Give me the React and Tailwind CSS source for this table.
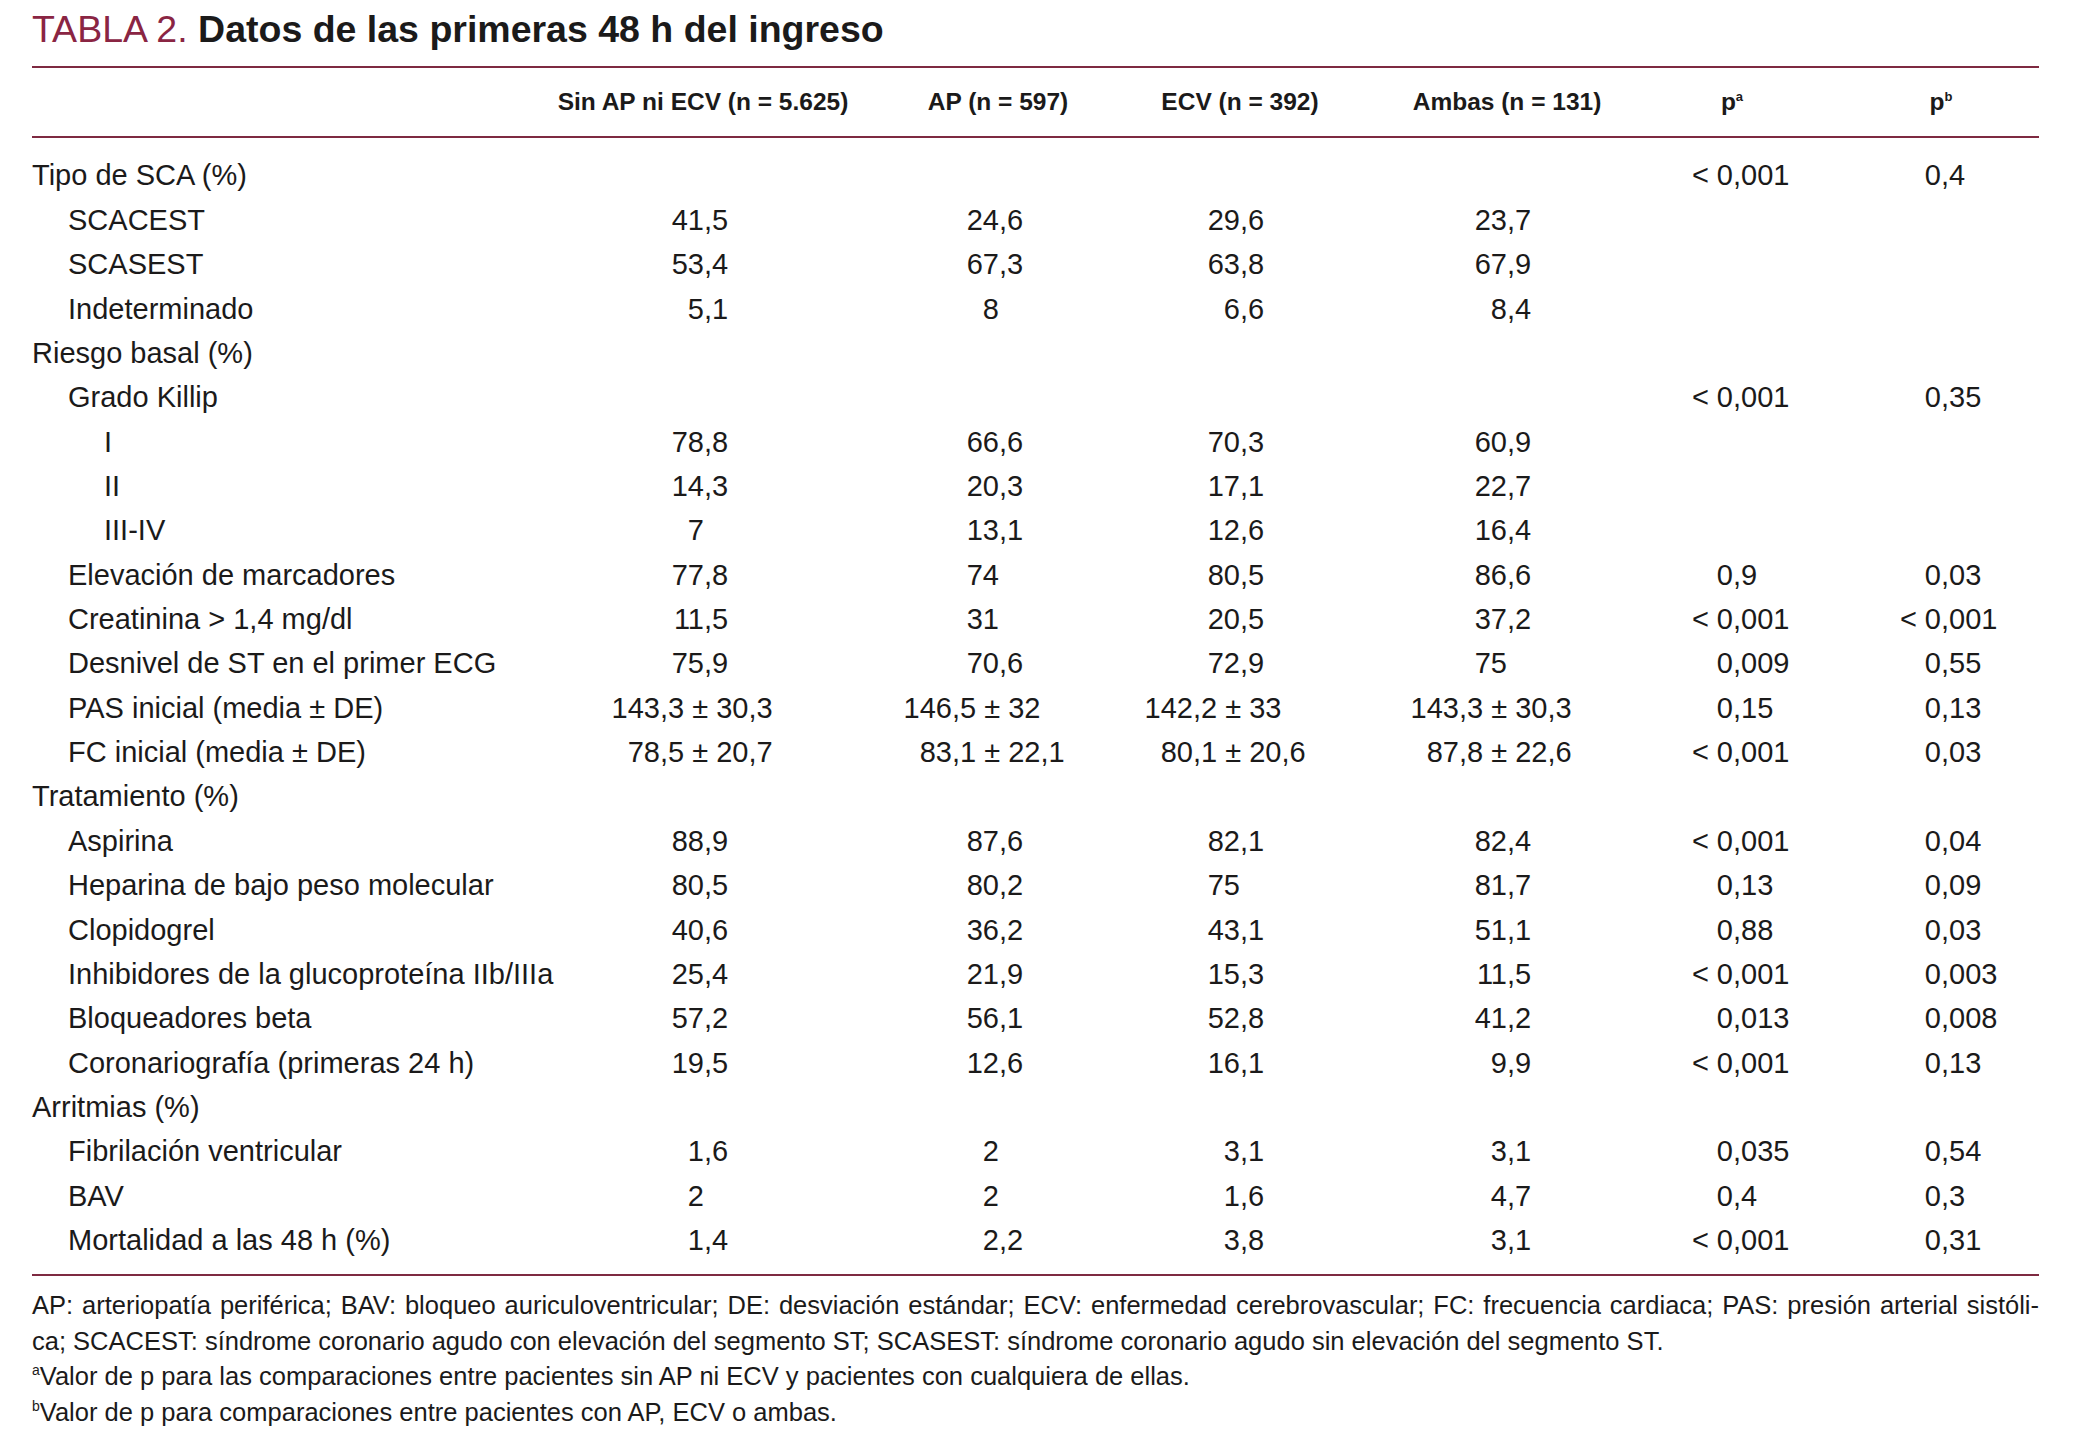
const COLS = [
  { head: 'Sin AP ni ECV (n = 5.625)', hd: 'pr-[10px]', anchor: 'w-[148px]', pm: 'w-[104px]' },
  { head: 'AP (n = 597)', hd: 'pl-[26px]', anchor: 'w-[139px]', pm: 'w-[92px]' },
  { head: 'ECV (n = 392)', hd: '', anchor: 'w-[130px]', pm: 'w-[83px]' },
  { head: 'Ambas (n = 131)', hd: 'pl-[4px]', anchor: 'w-[137px]', pm: 'w-[89px]' },
  { head: 'p', sup: 'a', hd: 'pr-[26px]', anchor: 'w-[93px]', pm: 'w-[93px]' },
  { head: 'p', sup: 'b', hd: 'pr-[7px]', anchor: 'w-[91px]', pm: 'w-[91px]' },
]

const ROWS = [
  ['Tipo de SCA (%)', 0, ['', '', '', '', '< 0,001', '0,4']],
  ['SCACEST', 1, ['41,5', '24,6', '29,6', '23,7']],
  ['SCASEST', 1, ['53,4', '67,3', '63,8', '67,9']],
  ['Indeterminado', 1, ['5,1', '8', '6,6', '8,4']],
  ['Riesgo basal (%)', 0, []],
  ['Grado Killip', 1, ['', '', '', '', '< 0,001', '0,35']],
  ['I', 2, ['78,8', '66,6', '70,3', '60,9']],
  ['II', 2, ['14,3', '20,3', '17,1', '22,7']],
  ['III-IV', 2, ['7', '13,1', '12,6', '16,4']],
  ['Elevación de marcadores', 1, ['77,8', '74', '80,5', '86,6', '0,9', '0,03']],
  ['Creatinina > 1,4 mg/dl', 1, ['11,5', '31', '20,5', '37,2', '< 0,001', '< 0,001']],
  ['Desnivel de ST en el primer ECG', 1, ['75,9', '70,6', '72,9', '75', '0,009', '0,55']],
  ['PAS inicial (media ± DE)', 1, ['143,3 ± 30,3', '146,5 ± 32', '142,2 ± 33', '143,3 ± 30,3', '0,15', '0,13']],
  ['FC inicial (media ± DE)', 1, ['78,5 ± 20,7', '83,1 ± 22,1', '80,1 ± 20,6', '87,8 ± 22,6', '< 0,001', '0,03']],
  ['Tratamiento (%)', 0, []],
  ['Aspirina', 1, ['88,9', '87,6', '82,1', '82,4', '< 0,001', '0,04']],
  ['Heparina de bajo peso molecular', 1, ['80,5', '80,2', '75', '81,7', '0,13', '0,09']],
  ['Clopidogrel', 1, ['40,6', '36,2', '43,1', '51,1', '0,88', '0,03']],
  ['Inhibidores de la glucoproteína IIb/IIIa', 1, ['25,4', '21,9', '15,3', '11,5', '< 0,001', '0,003']],
  ['Bloqueadores beta', 1, ['57,2', '56,1', '52,8', '41,2', '0,013', '0,008']],
  ['Coronariografía (primeras 24 h)', 1, ['19,5', '12,6', '16,1', '9,9', '< 0,001', '0,13']],
  ['Arritmias (%)', 0, []],
  ['Fibrilación ventricular', 1, ['1,6', '2', '3,1', '3,1', '0,035', '0,54']],
  ['BAV', 1, ['2', '2', '1,6', '4,7', '0,4', '0,3']],
  ['Mortalidad a las 48 h (%)', 1, ['1,4', '2,2', '3,8', '3,1', '< 0,001', '0,31']],
]

const INDENT = ['pl-0', 'pl-[36px]', 'pl-[72px]']
const GRID = 'grid grid-cols-[524px_304px_250px_260px_270px_210px_189px]'

function Rule({ className = '' }) {
  return <div className={`h-[2px] bg-[#7e2a41] ${className}`} />
}

// value aligned on its first comma
function Value({ text, col }) {
  if (!text) return <div />
  const i = text.indexOf(',')
  const head = i < 0 ? text : text.slice(0, i)
  const tail = i < 0 ? '' : text.slice(i)
  const w = text.includes('±') ? col.pm : col.anchor
  return (
    <div className="flex">
      <span className={`${w} shrink-0 text-right whitespace-pre`}>{head}</span>
      <span className="whitespace-pre">{tail}</span>
    </div>
  )
}

export default function App() {
  return (
    <div className="w-[2079px] min-h-[1450px] bg-white pl-[32px] pr-[40px] pt-[7px] font-['Liberation_Sans',Arial,sans-serif] text-[#1b1a1a]">

      {/* Caption */}
      <h1 className="text-[37.5px] leading-[44px] whitespace-nowrap">
        <span className="text-[#8a2543]">TABLA 2. </span>
        <span className="font-bold">Datos de las primeras 48 h del ingreso</span>
      </h1>

      <Rule className="mt-[15px]" />

      {/* Column headers */}
      <div className={`${GRID} h-[68px] items-center text-[24.5px] font-bold`}>
        <div />
        {COLS.map((c, i) => (
          <div key={i} className={`text-center whitespace-nowrap ${c.hd}`}>
            {c.head}
            {c.sup && <sup className="text-[13px] font-bold top-[-9px]">{c.sup}</sup>}
          </div>
        ))}
      </div>

      <Rule />

      {/* Body */}
      <div className="pt-[16px] text-[29px]">
        {ROWS.map(([label, level, vals]) => (
          <div key={label} className={`${GRID} h-[44.36px] items-center`}>
            <div className={`whitespace-nowrap ${INDENT[level]}`}>{label}</div>
            {COLS.map((c, i) => (
              <Value key={i} text={vals[i]} col={c} />
            ))}
          </div>
        ))}
      </div>

      <Rule className="mt-[11px]" />

      {/* Footnotes */}
      <div className="mt-[12px] text-[25.5px] leading-[35.7px]">
        <p className="text-justify [text-align-last:justify]">
          AP: arteriopatía periférica; BAV: bloqueo auriculoventricular; DE: desviación estándar; ECV: enfermedad cerebrovascular; FC: frecuencia cardiaca; PAS: presión arterial sistóli-
        </p>
        <p>ca; SCACEST: síndrome coronario agudo con elevación del segmento ST; SCASEST: síndrome coronario agudo sin elevación del segmento ST.</p>
        <p><sup className="text-[14px] top-[-10px]">a</sup>Valor de p para las comparaciones entre pacientes sin AP ni ECV y pacientes con cualquiera de ellas.</p>
        <p><sup className="text-[14px] top-[-10px]">b</sup>Valor de p para comparaciones entre pacientes con AP, ECV o ambas.</p>
      </div>

    </div>
  )
}
